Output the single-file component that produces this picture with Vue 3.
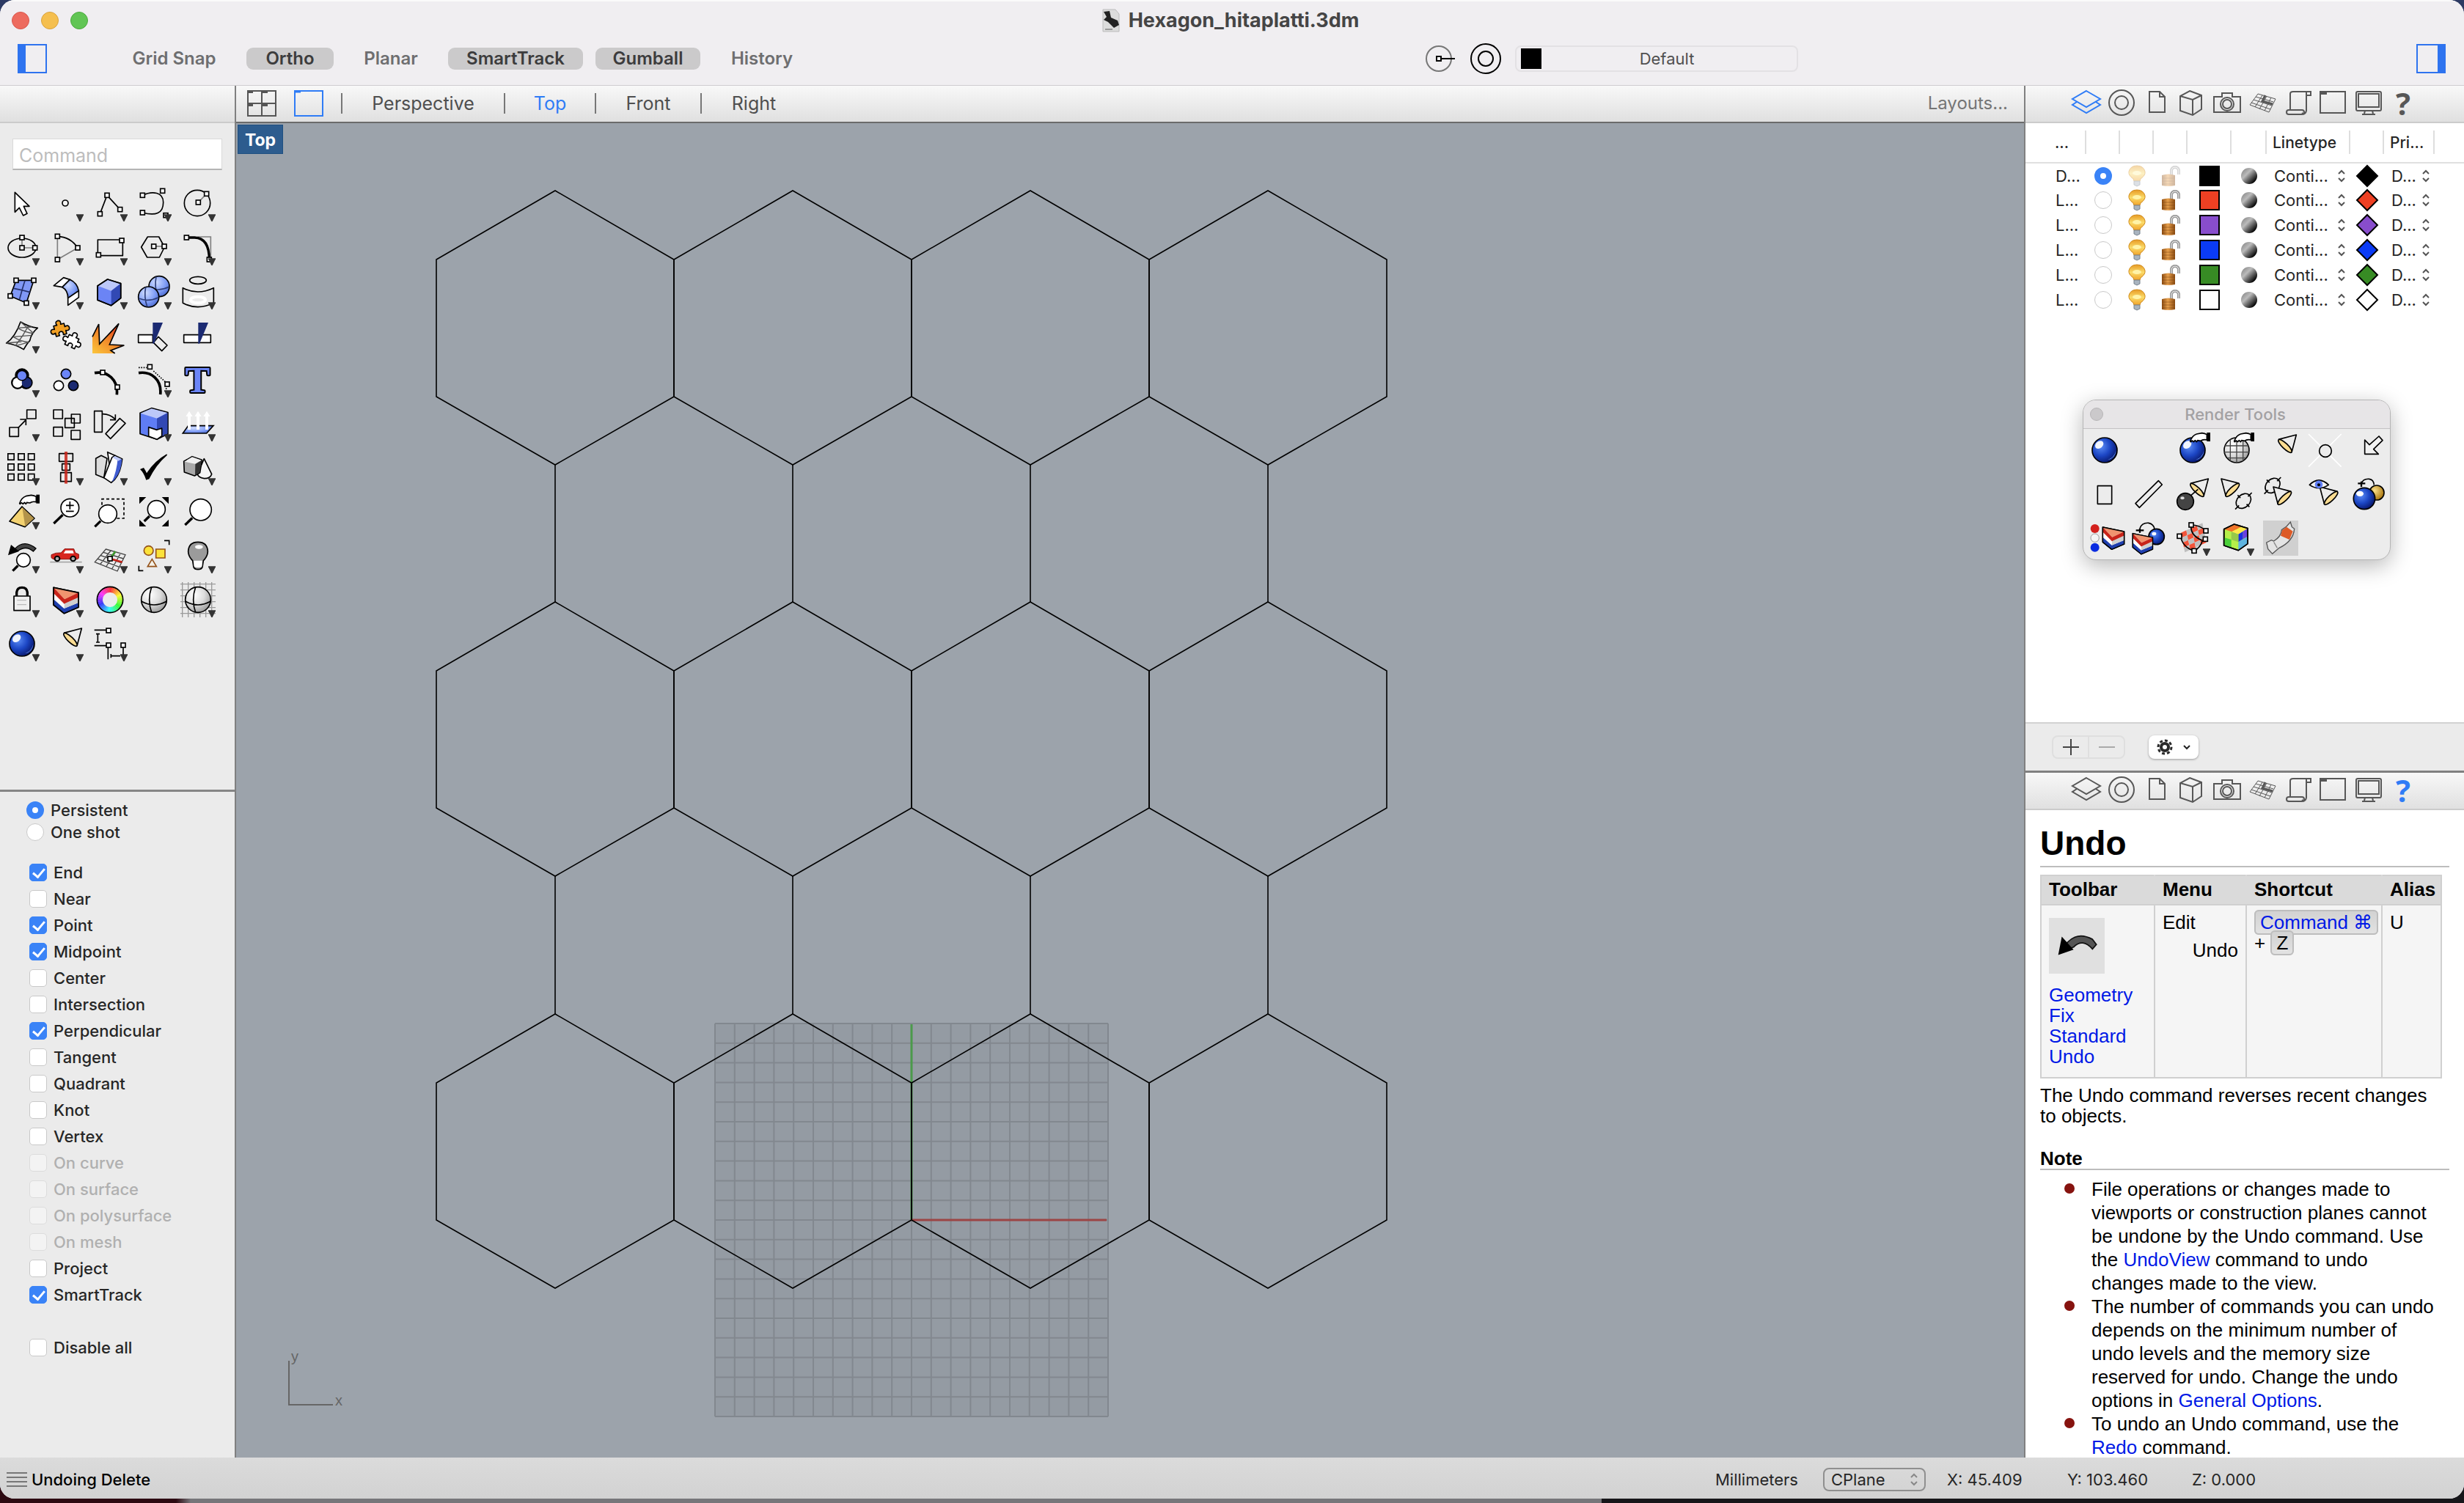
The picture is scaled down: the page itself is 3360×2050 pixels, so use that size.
<script setup>
import { ref } from 'vue'

const modes = ref([
  { label: 'Grid Snap', on: false, width: 163 },
  { label: 'Ortho', on: true, width: 119 },
  { label: 'Planar', on: false, width: 122 },
  { label: 'SmartTrack', on: true, width: 184 },
  { label: 'Gumball', on: true, width: 143 },
  { label: 'History', on: false, width: 134 },
])

const views = [
  { name: 'Perspective', width: 220 },
  { name: 'Top', width: 122 },
  { name: 'Front', width: 142 },
  { name: 'Right', width: 142 },
]
const activeView = ref('Top')

const snapMode = ref('Persistent')
const snaps = ref([
  { label: 'End', on: true },
  { label: 'Near' },
  { label: 'Point', on: true },
  { label: 'Midpoint', on: true },
  { label: 'Center' },
  { label: 'Intersection' },
  { label: 'Perpendicular', on: true },
  { label: 'Tangent' },
  { label: 'Quadrant' },
  { label: 'Knot' },
  { label: 'Vertex' },
  { label: 'On curve', off: true },
  { label: 'On surface', off: true },
  { label: 'On polysurface', off: true },
  { label: 'On mesh', off: true },
  { label: 'Project' },
  { label: 'SmartTrack', on: true },
])

const layers = [
  { name: 'D...', color: '#000000' },
  { name: 'L...', color: '#ee4023' },
  { name: 'L...', color: '#884dcc' },
  { name: 'L...', color: '#0b3bf5' },
  { name: 'L...', color: '#378b24' },
  { name: 'L...', color: '#ffffff' },
]
const currentLayer = ref(0)

// Icon drawing helpers; tool icons live in a 144-unit square.
const K = 'stroke="#000" stroke-width="5" stroke-linejoin="round"'
const p = (d, fill = 'none', extra = K) => `<path d="${d}" fill="${fill}" ${extra}/>`
const line = (d, w = 5, color = '#000') => `<path d="${d}" fill="none" stroke="${color}" stroke-width="${w}"/>`
const grey = (d) => line(d, 5, '#808080')
const c = (x, y, r, fill = '#fff', w = 5) => `<circle cx="${x}" cy="${y}" r="${r}" fill="${fill}" stroke="#000" stroke-width="${w}"/>`
const sq = (x, y, s = 18, fill = '#fff') => `<rect x="${x - s / 2}" y="${y - s / 2}" width="${s}" height="${s}" fill="${fill}" stroke="#000" stroke-width="5"/>`
const sqs = (...pts) => pts.map(([x, y]) => sq(x, y)).join('')
const menu = '<path d="M114 115H144V118L131 144H127L114 118Z" fill="#333"/>'

const hand = p('M62 36Q70 12 88 6L110 2Q122 3 130 8V30Q115 26 104 34L92 32 88 38 82 32 76 38 70 33 64 38Z', '#fff') +
  '<path d="M130 0H144V36H130Z"/>'
const ball = c(72, 72, 51, 'url(#blue-ball)') + '<ellipse cx="50" cy="50" rx="19" ry="14" transform="rotate(-40 50 50)" fill="#fff" opacity=".92"/><path d="M84 112Q112 102 118 74Q116 104 84 112" fill="#7fb4ff"/>'
const globe = c(72, 72, 52, 'url(#grey-ball)') + line('M62 20Q44 72 62 124M20 78Q72 108 124 78')
const spot = '<path d="M63 28L136 9L117 81" fill="#ececec" stroke="#000" stroke-width="5" stroke-linejoin="round"/><ellipse cx="90" cy="55" rx="11" ry="37" transform="rotate(-46 90 55)" fill="#fbdc91" stroke="#000" stroke-width="5"/>'
const lens = (x, y, r, hx, hy) => {
  const d = Math.hypot(hx - x, hy - y)
  const ex = x + ((hx - x) * (r + 4)) / d
  const ey = y + ((hy - y) * (r + 4)) / d
  return line(`M${hx} ${hy}L${ex} ${ey}`, 10) + c(x, y, r)
}
const wedge = p('M21 22L123 43V103L64 128L21 93Z', '#fff') +
  '<path d="M21 22L123 43L66 70Z" fill="#f0946f"/><path d="M21 22L66 70L123 43V64L66 90L21 45Z" fill="#c8241a"/><path d="M21 70L64 108L123 84V103L64 128L21 93Z" fill="#1f3fae"/><path d="M66 88L123 62V84L64 108Z" fill="#cfcfcf"/>' +
  p('M21 22L123 43V103L64 128L21 93Z')
const cube = p('M21 48L62 21L116 38V98L77 128L21 106Z', '#6b84f5') +
  '<path d="M23 48L62 23L114 39L77 68Z" fill="#bcc8f9"/><path d="M77 68L114 40V97L77 126Z" fill="#3249b4"/>' + p('M21 48L62 21L116 38V98L77 128L21 106Z')
const wheel = Array.from({ length: 36 }, (_, i) => {
  const a = ((i * 10 - 90) * Math.PI) / 180
  const b = ((i * 10 - 79) * Math.PI) / 180
  const at = (r, t) => `${(72 + r * Math.cos(t)).toFixed(1)} ${(72 + r * Math.sin(t)).toFixed(1)}`
  return `<path d="M${at(30, a)}L${at(53, a)}L${at(53, b)}L${at(30, b)}Z" fill="hsl(${i * 10} 95% 60%)"/>`
}).join('') + '<circle cx="72" cy="72" r="53" fill="none" stroke="#000" stroke-width="5"/>'
const ring = (x, y) => `<g transform="rotate(45 ${x} ${y})"><ellipse cx="${x}" cy="${y}" rx="26" ry="34" fill="none" stroke="#000" stroke-width="5"/><path d="M${x} ${y - 48}v22M${x} ${y + 48}v-22M${x - 34} ${y}h16M${x + 34} ${y}h-16" stroke="#000" stroke-width="5"/></g>`
const meshBall = (x, y) => c(x, y, 42, 'url(#soft-blue)') + line(`M${x - 12} ${y - 40}Q${x - 20} ${y} ${x - 6} ${y + 40}M${x - 40} ${y + 6}Q${x} ${y + 22} ${x + 40} ${y + 2}`, 5, '#2f3f7a')
const undoArrow = '<path d="M24 90Q60 20 120 52L132 68L120 82Q90 48 62 76Z" fill="#555" stroke="#111" stroke-width="4"/><path d="M15 100L26 44L62 84Z" fill="#000"/>'
// A jigsaw piece centred on the origin, one notch and three knobs.
const piece = (x, y, turn, fill) => `<g transform="translate(${x} ${y}) rotate(${turn})">` +
  p('M-22 -22H-8Q-14 -38 0 -39Q14 -38 8 -22H22V-8Q38 -14 39 0Q38 14 22 8V22H8Q12 8 0 7Q-12 8 -8 22H-22V8Q-38 14 -39 0Q-38 -14 -22 -8Z', fill) + '</g>'

const tools = [
  ['Select', p('M43 25V106L61 88L77 120L93 112L79 82H102Z', '#fff')],
  ['Point', c(69, 69, 12, '#f4f4f4'), 1],
  ['Polyline', line('M31 113L60 37L113 95') + sqs([60, 37], [31, 113], [113, 95]), 1],
  ['Curve', line('M25 37C66 18 110 24 110 66C110 112 78 122 25 108') + sqs([25, 37], [107, 19], [25, 108], [120, 119]), 1],
  ['Circle', c(69, 69, 53, 'none') + grey('M73 66L107 31') + sqs([107, 31], [73, 66]), 1],
  ['Ellipse', `<ellipse cx="72" cy="72" rx="57" ry="39" fill="none" ${K}/>` + grey('M72 30V72H125') + sqs([72, 30], [72, 72], [125, 72]), 1],
  ['Arc', grey('M37 25V120L120 72') + line('M37 25Q90 27 120 72') + sqs([37, 25], [37, 120], [120, 72]), 1],
  ['Rectangle', p('M22 39H124V104H22Z') + sqs([120, 42], [25, 101]), 1],
  ['Polygon', p('M20 69L46 27H92L115 69L94 111H44Z') + grey('M71 66H114') + sqs([71, 66], [114, 66]), 1],
  ['Fillet', grey('M70 27H124V110') + line('M25 30H58Q118 32 118 120', 10) + sqs([25, 30], [118, 120]), 1],
  ['Surface', p('M48 25H120L90 118L24 89Z', '#8098f6') + line('M84 26Q76 50 62 102M38 58Q70 64 106 74', 5, '#26336e') + sqs([48, 25], [120, 25], [90, 118], [24, 89]), 1],
  ['Bend surface', p('M22 47L62 14L88 22L57 53Z', '#fff') + p('M57 53L88 22Q118 36 124 68L80 98Q80 66 57 53Z', 'url(#soft-blue)') + p('M80 98L124 68V95L80 127Z', '#fff'), 1],
  ['Box', cube, 1],
  ['Sphere', meshBall(93, 50) + meshBall(50, 93), 1],
  ['Project', `<ellipse cx="72" cy="25" rx="34" ry="15" fill="none" ${K}/>` + '<ellipse cx="72" cy="105" rx="30" ry="13" fill="none" stroke="#fff" stroke-width="12"/>' + p('M10 56Q70 88 136 56V118Q70 150 10 118Z'), 1],
  ['Mesh', p('M66 15Q100 36 136 40Q110 60 104 92Q92 104 79 128Q48 108 8 102Q44 78 66 15Z') + line('M54 40Q88 60 120 62M36 76Q68 96 100 98M98 32Q76 74 44 114M66 15L120 62M54 40L112 36M36 76L112 70M8 102L70 96M50 112L100 98', 4, '#555'), 1],
  ['Join', piece(96, 96, 25, '#fff') + piece(48, 48, -15, '#f2a024')],
  ['Explode', '<path d="M0 76L26 24L29 106L108 22L70 108L130 111L75 132L92 144H0Z" fill="url(#fire)"/>' + line('M0 76L26 24L29 106L108 22L70 108L130 111L75 132L92 144')],
  ['Trim', p('M8 68H67V100H8Z', '#fff') + p('M90 76L126 111L104 134L70 100Z', '#ececec') + '<path d="M67 18H108L72 104H67Z" fill="#1b2a72"/>'],
  ['Split', p('M14 68H124V100H14Z', '#fff') + '<path d="M73 18H114L78 104H73Z" fill="#1b2a72"/>'],
  ['Group', c(72, 54, 22, '#000', 14) + c(54, 84, 22, '#000', 10) + c(89, 84, 22, '#000', 10) + '<circle cx="54" cy="84" r="20" fill="#fff"/><circle cx="91" cy="84" r="20" fill="#1b2a72"/>' + c(72, 55, 20, '#6b85f7', 4), 1],
  ['Ungroup', c(72, 48, 20, '#6b85f7') + c(42, 96, 20) + c(102, 96, 20, '#1b2a72')],
  ['Edit points', line('M9 44C62 34 106 72 100 133', 11) + sqs([42, 42], [102, 102])],
  ['Control points', line('M9 44C62 36 104 72 98 132', 11) + '<path d="M9 22H42M70 36L120 82M122 106V136" stroke="#000" stroke-width="5" stroke-dasharray="5 5"/>' + sqs([55, 19], [126, 90]), 1],
  ['Text', '<text x="70" y="122" text-anchor="middle" font-family="Liberation Serif, serif" font-weight="700" font-size="152" fill="#6b85f7" stroke="#000" stroke-width="12" stroke-linejoin="round" paint-order="stroke">T</text>'],
  ['Move', p('M92 15H129V51H92Z') + p('M21 87H58V124H21Z') + line('M56 89L86 58M64 54H88V78'), 1],
  ['Copy', p('M21 15H58V51H21ZM94 33H130V69H94ZM68 50H106V88H68ZM21 86H58V123H21ZM93 99H130V136H93Z')],
  ['Rotate', p('M8 20H40V106H8Z') + p('M112 50L135 70L74 133L54 113Z') + line('M42 32Q72 32 94 54M94 34V56H72')],
  ['Cap', p('M15 28L62 8L129 26V113L84 136L15 113Z', '#5f7df4') + '<path d="M17 29L62 10L127 27L84 50Z" fill="#bcc8f9"/><path d="M84 50L127 28V112L84 134Z" fill="#3249b4"/>' + p('M50 86L84 97L104 90V122L84 136L50 123Z', '#fff'), 1],
  ['Extrude', '<path d="M32 80H135L107 111H10Z" fill="url(#soft-blue)" stroke="#000" stroke-width="5"/><path d="M36 96V36M72 96V36M108 96V36" stroke="#fff" stroke-width="12"/><path d="M22 42L36 20L50 42ZM58 42L72 20L86 42ZM94 42L108 20L122 42Z" fill="#fff"/>', 1],
  ['Array', [27, 69, 110].map((y) => [27, 69, 110].map((x) => sq(x, y, 25, 'none')).join('')).join(''), 1],
  ['Align', p('M44 14H100V46H44ZM56 56H88V82H56ZM50 92H94V128H50Z') + '<path d="M66 6H78V137H66Z" fill="#c8241a" opacity=".85"/>', 1],
  ['Fold', p('M62 8L92 22L70 60Z', '#fff') + p('M14 34L36 22L60 34L47 113L14 100Z', '#dcdcdc') + p('M47 113L80 30L92 22L122 36L118 60Q108 110 77 133Z', '#fff') + '<path d="M104 32L121 38Q116 100 80 130Q100 84 104 32Z" fill="#3f5bd0"/><path d="M82 30L92 24L119 36L106 44Z" fill="#bcc8f9"/>', 1],
  ['Check', '<path d="M15 78L30 72Q38 84 42 94Q74 44 124 16L126 20Q80 60 52 118L40 122Q30 92 15 78Z"/>', 1],
  ['Solids', p('M97 35L128 98Q122 116 98 116Q72 112 70 98Z', '#f6f6f6') + p('M14 46L48 26L88 40L80 92L58 105L16 90Z', '#a9a9a9') + '<path d="M16 47L48 28L86 41L60 56Z" fill="#f0f0f0"/><path d="M61 57L86 42L79 91L60 103Z" fill="#333"/>', 1],
  ['Set surface', p('M72 51L123 99L84 134L21 111Z', '#f3d271') + '<path d="M73 54L121 99L85 132Z" fill="#b3934a"/>' + `<g transform="translate(0 2)">${hand}</g>`, 1],
  ['Zoom in or out', lens(88, 56, 37, 22, 120) + line('M88 30V62M72 46H104M72 70H104')],
  ['Zoom window', '<path d="M39 44V20H129V99H98" fill="none" stroke="#000" stroke-width="5" stroke-dasharray="12 9"/>' + lens(63, 81, 37, 10, 133)],
  ['Zoom extents', '<path d="M12 12H40L12 40ZM132 12H104L132 40ZM12 132V104L40 132ZM132 132V104L104 132Z"/>' + lens(82, 62, 36, 32, 111)],
  ['Zoom selected', lens(83, 64, 44, 19, 126)],
  ['Undo view', '<path d="M40 46Q80 2 129 42L118 54Q88 28 56 52Z" fill="#444" stroke="#000" stroke-width="4"/><path d="M15 70L27 27L60 54Z"/>' + lens(78, 90, 28, 34, 134), 1],
  ['Right view', '<path d="M7 98H137" stroke="#a9a9a9" stroke-width="5"/><path d="M12 68Q30 58 52 60L66 44H104L110 60L124 66V82L118 86H20L12 80Z" fill="#d8261f" stroke="#8c1410" stroke-width="3"/><path d="M70 50L62 62H104L100 50Z" fill="#fff"/>' + c(36, 84, 10, '#aaa', 6) + c(101, 84, 10, '#aaa', 6), 1],
  ['Set CPlane', line('M55 45L135 68L102 135L10 98ZM75 51L32 107M95 56L56 117M115 62L80 126M45 58L127 84M34 71L118 101M22 85L110 118', 4, '#444') + line('M72 84L94 54', 8, '#3f9a2e') + line('M72 84L122 98', 8, '#c8241a') + sqs([72, 84]), 1],
  ['Select objects', '<g fill="#fbe23a" stroke="#94521a" stroke-width="5"><circle cx="50" cy="51" r="19"/><path d="M80 45H117V81H80Z"/><path d="M64 86L46 116H82Z" fill="#f4f1e8"/></g>' + line('M114 10H134V28M10 113V133H28'), 1],
  ['Hide', p('M54 118L50 92Q32 74 32 54Q34 16 72 16Q110 16 112 54Q112 74 94 92L90 118Q86 128 72 128Q58 128 54 118Z', '#9b9b9b') + '<path d="M56 116L54 92H90L88 116Q72 124 56 116Z" fill="#fff"/><ellipse cx="76" cy="36" rx="16" ry="8" fill="#fff"/>', 1],
  ['Lock', line('M50 56V42Q52 22 72 22Q92 22 94 42V56', 10) + p('M39 57H105V116H39Z', '#efefef') + line('M52 74H90M52 92H90', 4, '#bbb'), 1],
  ['Edit layers', wedge, 1],
  ['Color', wheel, 1],
  ['Shade', globe],
  ['Ghosted', line('M0 8H144M0 32H144M0 56H144M0 80H144M0 104H144M0 128H144M8 0V144M32 0V144M56 0V144M80 0V144M104 0V144M128 0V144', 4, '#9a9a9a') + globe, 1],
  ['Render', ball, 1],
  ['Spotlight', spot, 1],
  ['Dimension', line('M8 16H60M8 80H60M22 30V68M15 32H30M15 66H30M64 88V136M126 88V134M74 122H114M76 114V130') + sqs([66, 18], [66, 78], [126, 78]), 1],
].map(([name, art, more]) => ({ name, art: art + (more ? menu : '') }))

const checker = ['#f2543a', '#bfbfbf']
const renderTools = [
  ['Render', ball],
  null,
  ['Render preview', ball + hand],
  ['Render mesh', c(72, 72, 51, 'url(#grey-ball)') + line('M24 54H120M21 80H123M34 104H110M46 28V116M72 21V123M98 28V116', 4, '#444') + hand],
  ['Spotlight', spot],
  ['Point light', line('M6 6L140 140M140 6L6 140', 5, '#fff') + c(75, 75, 25, '#ececec')],
  ['Directional light', p('M114 15L129 32L92 68L112 88H56V30L75 50Z', '#f2f2f2')],
  ['Rectangular light', p('M43 38H101V112H43Z')],
  ['Linear light', p('M112 17L127 33L34 127L18 110Z')],
  ['Light target', spot + line('M94 52L52 88') + c(42, 102, 34, '#444') + '<ellipse cx="30" cy="88" rx="8" ry="6" fill="#ddd"/>'],
  ['Edit light', `<g transform="matrix(-1 0 0 1 145 0)">${spot}</g>` + ring(100, 100)],
  ['Aim light', ring(39, 37) + `<g transform="translate(178 33) scale(-1 1)">${spot}</g>`],
  ['Light view', `<g transform="translate(188 33) scale(-1 1)">${spot}</g>` + p('M10 34Q48 -4 88 34Q48 60 10 34Z', '#f4f4f4') + '<circle cx="48" cy="32" r="16" fill="#5f7df4"/><circle cx="48" cy="34" r="6"/>'],
  ['Match properties', c(105, 66, 30, 'url(#gold)') + c(54, 90, 44, 'url(#blue-ball)') + '<ellipse cx="36" cy="70" rx="15" ry="11" fill="#fff"/>' + line('M42 30Q48 8 74 10Q92 12 94 34') + line('M28 28H58M42 20V42', 7)],
  ['Layer materials', '<circle cx="32" cy="33" r="18" fill="#d3201c"/><circle cx="32" cy="71" r="17" fill="#f4f4f4" stroke="#999" stroke-width="3"/><circle cx="32" cy="110" r="18" fill="#0a2be0"/>' + `<g transform="translate(46 8) scale(.86)">${wedge}</g>`],
  ['Material from layer', c(104, 66, 32, 'url(#blue-ball)') + '<ellipse cx="94" cy="54" rx="9" ry="7" fill="#fff"/>' + `<g transform="translate(-10 35) scale(.8)">${wedge}</g>` + line('M36 32Q44 8 72 10Q92 14 96 34') + line('M20 40H52M36 32V50', 7)],
  ['Mapping', [0, 1, 2, 3].map((r) => [0, 1, 2, 3].map((k) => `<path d="M${24 + k * 22 + r * 4} ${50 + r * 20 - k * 10}l22 -10l4 20l-22 10z" fill="${checker[(r + k) % 2]}"/>`).join('')).join('') + line('M22 62Q30 110 78 124M66 18Q60 60 112 82M66 18Q100 18 124 40M112 82Q104 112 78 124') + sqs([18, 64], [66, 18], [126, 42], [124, 76], [78, 124]) + menu],
  ['Texture', p('M20 35L62 15L117 32V95L79 122L20 102Z', '#b6f04a') + '<path d="M22 36L62 17L90 26L52 46Z" fill="#f0742a"/><path d="M90 26L115 33L79 56L52 46Z" fill="#ffe84a"/><path d="M79 56L98 44V76L79 88Z" fill="#1a2fe0"/><path d="M98 44L116 33V66L98 76Z" fill="#6a3fe0"/><path d="M79 88L116 66V95L79 121Z" fill="#5fb4e0"/><path d="M50 46L79 56V88L50 78Z" fill="#97c94a"/><path d="M22 70L50 78V110L22 101Z" fill="#4bd03a"/>' + p('M20 35L62 15L117 32V95L79 122L20 102Z') + menu],
  ['Decal', '<path d="M0 0H144V144H0Z" fill="#d0d0d0"/>' + p('M14 90L34 80L44 84Q74 66 76 38L96 24L112 6L118 26L128 34Q124 84 66 112L38 136L20 116Z', '#e4e4e4', 'stroke="#555" stroke-width="4"') + '<path d="M78 40L96 26L122 44L108 78L72 62Z" fill="#dd5a26"/><path d="M44 88L58 112" stroke="#888" stroke-width="4"/>'],
].map((t) => t && { name: t[0], art: t[1] })

const panelTabs = [
  ['Layers', '<path d="M24 8L43 19L24 30L5 19ZM11 23L5 27L24 38L43 27L37 23"/>'],
  ['Properties', '<circle cx="24" cy="24" r="17"/><circle cx="24" cy="24" r="9"/>'],
  ['Notes', '<path d="M14 9H28L35 16V37H14ZM28 9V16H35"/>'],
  ['Display objects', '<path d="M21 8L37 14V33L25 41L8 35V15ZM8 15L25 20L37 14M25 20V41"/>'],
  ['Named views', '<path d="M6 16H17V11H31V16H42V37H6Z"/><circle cx="24" cy="26" r="9"/><circle cx="24" cy="26" r="6"/>'],
  ['Named CPlanes', '<path d="M18 12L42 19L33 37L7 27ZM24 14L14 30M30 15L20 33M36 17L27 35M15 16L39 23M12 20L37 28M9 24L35 33" stroke-width="1"/><path d="M28 14L24 22L38 26" stroke-width="3"/>'],
  ['Script', '<path d="M14 34V12Q14 9 18 9H42V14H36V9M36 14V35Q35 40 30 40H12Q9 40 9 37T12 34H30Q33 34 33 37T30 38"/>'],
  ['Layouts', '<path d="M7 9H41V38H7Z"/><path d="M8 10H15V12H8Z" fill="currentColor"/>'],
  ['Display', '<rect x="8" y="9" width="34" height="26" rx="2"/><path d="M11 12H39V30H11ZM20 35L19 39M30 35L31 39M16 40H34"/>'],
]

// Honeycomb: pointy-top cells, corners in viewport coordinates.
const xs = [435, 759, 1083, 1407]
const cells = [92, 653, 1215].flatMap((y) =>
  xs.map((x) => `M${x} ${y}L${x + 162} ${y + 94}V${y + 281}L${x} ${y + 374}L${x - 162} ${y + 281}V${y + 94}Z`)
)
const links = [466, 1027].flatMap((y) => xs.map((x) => `M${x} ${y}v188`))
const gridSteps = Array.from({ length: 21 }, (_, i) => i * 26.8)
</script>

<template>
  <div class="desktop">
    <svg class="defs" aria-hidden="true">
      <defs>
        <radialGradient id="blue-ball" cx=".35" cy=".35" r=".75"><stop offset="0" stop-color="#5b8cf5" /><stop offset=".5" stop-color="#1c46c4" /><stop offset="1" stop-color="#050f5c" /></radialGradient>
        <radialGradient id="soft-blue" cx=".35" cy=".3" r=".8"><stop offset="0" stop-color="#cfdcff" /><stop offset=".6" stop-color="#7d9bf5" /><stop offset="1" stop-color="#4462c8" /></radialGradient>
        <radialGradient id="grey-ball" cx=".35" cy=".3" r=".8"><stop offset="0" stop-color="#fff" /><stop offset=".5" stop-color="#ddd" /><stop offset="1" stop-color="#8f8f8f" /></radialGradient>
        <radialGradient id="gold" cx=".35" cy=".35" r=".7"><stop offset="0" stop-color="#fbe08a" /><stop offset="1" stop-color="#a8740c" /></radialGradient>
        <linearGradient id="fire" x1="0" y1="1" x2=".8" y2="0"><stop offset="0" stop-color="#fbc63c" /><stop offset=".5" stop-color="#f28a2a" /><stop offset="1" stop-color="#e0301e" /></linearGradient>
        <linearGradient id="mat" x1=".1" y1="0" x2=".9" y2=".8"><stop offset="0" stop-color="#333" /><stop offset=".15" stop-color="#999" /><stop offset=".4" stop-color="#bbb" /><stop offset="1" stop-color="#000" /></linearGradient>
        <linearGradient id="bulb" x1="0" y1="0" x2="0" y2="1"><stop offset="0" stop-color="#e79a24" /><stop offset=".5" stop-color="#fbdc6a" /><stop offset="1" stop-color="#f0a32a" /></linearGradient>
        <linearGradient id="brass" x1="0" y1="0" x2="1" y2="0"><stop offset="0" stop-color="#8a4a10" /><stop offset=".45" stop-color="#e8a04c" /><stop offset="1" stop-color="#8a4a10" /></linearGradient>
      </defs>
    </svg>

    <div class="window">
      <header class="titlebar">
        <div class="title-row">
          <div class="lights">
            <button class="light red" aria-label="Close"></button>
            <button class="light yellow" aria-label="Minimize"></button>
            <button class="light green" aria-label="Zoom"></button>
          </div>
          <svg class="doc-icon" viewBox="0 0 24 32"><path d="M1 1H18L23 7V31H1Z" fill="#dcdcdc" stroke="#bbb" /><path d="M2 4L10 3 12 12 21 16 23 22 16 26 8 18 2 15 6 11Z" fill="#222" /><path d="M4 28H14" stroke="#999" stroke-width="2" /></svg>
          <h1 class="doc-title">Hexagon_hitaplatti.3dm</h1>
        </div>
        <div class="tool-row">
          <button class="panel-toggle toggle-start" aria-label="Toggle left sidebar"></button>
          <div class="modes">
            <button v-for="m in modes" :key="m.label" class="mode" :class="{ on: m.on }" :style="{ width: m.width + 'px' }" @click="m.on = !m.on">{{ m.label }}</button>
          </div>
          <div class="layer-picker">
            <svg width="40" height="42" viewBox="0 0 40 42"><circle cx="18" cy="21" r="17" fill="none" stroke="#777" stroke-width="2" /><path d="M18 21H40" stroke="#000" stroke-width="2" /><path d="M15 18H21V24H15Z" fill="#fff" stroke="#000" stroke-width="2" /></svg>
            <svg width="42" height="42" viewBox="0 0 42 42" fill="none" stroke="#000" stroke-width="2"><circle cx="21" cy="21" r="20" /><circle cx="21" cy="21" r="10" /></svg>
            <button class="current-layer"><span class="swatch"></span><span class="layer-name">Default</span></button>
          </div>
          <button class="panel-toggle toggle-end" aria-label="Toggle right sidebar"></button>
        </div>
      </header>

      <main class="body">
        <aside class="left">
          <div class="strip"></div>
          <section class="tools-pane">
            <input class="command" type="text" placeholder="Command" aria-label="Command" />
            <div class="tools">
              <button v-for="t in tools" :key="t.name" class="tool" :aria-label="t.name">
                <svg viewBox="0 0 144 144"><g v-html="t.art"></g></svg>
              </button>
            </div>
          </section>
          <section class="snaps">
            <div class="snap-modes">
              <label v-for="m in ['Persistent', 'One shot']" :key="m" class="option"><input v-model="snapMode" type="radio" name="snap-mode" :value="m" />{{ m }}</label>
            </div>
            <label v-for="s in snaps" :key="s.label" class="option check" :class="{ off: s.off }"><input v-model="s.on" type="checkbox" :disabled="s.off" />{{ s.label }}</label>
            <label class="option check all"><input type="checkbox" />Disable all</label>
          </section>
        </aside>

        <section class="center">
          <nav class="strip views">
            <button class="view-icon" aria-label="Four viewports"><svg width="40" height="36" viewBox="0 0 40 36"><path d="M1 1H39V35H1ZM20 1V35M1 18H39" fill="none" stroke="#555" stroke-width="2" /><path d="M1 2H8M20 2H28M1 20H8M20 20H28" stroke="#555" stroke-width="4" /></svg></button>
            <button class="view-icon" aria-label="Single viewport"><svg width="40" height="36" viewBox="0 0 40 36"><path d="M1 1H39V35H1Z" fill="none" stroke="#2f7cf6" stroke-width="2" /><path d="M1 2H9" stroke="#2f7cf6" stroke-width="3" /></svg></button>
            <template v-for="v in views" :key="v.name">
              <span class="sep"></span>
              <button class="view" :class="{ active: v.name === activeView }" :style="{ width: v.width + 'px' }" @click="activeView = v.name">{{ v.name }}</button>
            </template>
            <button class="layouts">Layouts...</button>
          </nav>
          <div class="viewport">
            <svg class="scene">
              <rect x="653" y="1228" width="536" height="536" fill="#949ba3" />
              <g stroke="#82888f" stroke-width="2">
                <path v-for="s in gridSteps" :key="s" :d="`M${653 + s} 1228v536M653 ${1228 + s}h536`" />
              </g>
              <path d="M921 1229V1496" stroke="#4b9a4b" stroke-width="3" />
              <path d="M921 1496H1187" stroke="#9c4545" stroke-width="3" />
              <g fill="none" stroke="#000" stroke-width="1.6">
                <path v-for="d in cells" :key="d" :d="d" />
                <path v-for="d in links" :key="d" :d="d" />
              </g>
              <path d="M72 1688V1748H132" fill="none" stroke="#666" stroke-width="2" />
              <text x="75" y="1689" class="axis">y</text>
              <text x="135" y="1749" class="axis">x</text>
            </svg>
            <button class="view-title">Top</button>
          </div>
        </section>

        <aside class="right">
          <section class="layers-pane">
            <nav class="strip tabs">
              <button v-for="(t, i) in panelTabs" :key="t[0]" class="tab" :class="{ active: i === 0 }" :aria-label="t[0]"><svg viewBox="0 0 48 48"><g v-html="t[1]"></g></svg></button>
              <button class="tab help-tab">?</button>
            </nav>
            <div class="layer-list">
              <table class="layers">
                <colgroup>
                  <col class="w-name" /><col class="w-icon" /><col class="w-icon" /><col class="w-icon" /><col class="w-color" /><col class="w-mat" /><col class="w-type" /><col class="w-icon" /><col class="w-print" /><col />
                </colgroup>
                <thead>
                  <tr><th class="first">...</th><th></th><th></th><th></th><th></th><th></th><th>Linetype</th><th></th><th>Pri...</th><th></th></tr>
                </thead>
                <tbody>
                  <tr v-for="(l, i) in layers" :key="i">
                    <td class="first">{{ l.name }}</td>
                    <td class="mid"><input v-model="currentLayer" type="radio" name="layer" :value="i" :aria-label="'Current layer ' + (i + 1)" /></td>
                    <td class="mid" :class="{ faded: i === 0 }">
                      <svg width="24" height="30" viewBox="0 0 24 30"><path d="M7 19Q0 14 1 9Q3 1 12 1T23 9Q24 14 17 19L16 22H8Z" fill="url(#bulb)" stroke="#d08a1c" /><ellipse cx="12" cy="11" rx="6" ry="3" fill="#fff3a8" /><path d="M8 22H16V27L12 29L8 27Z" fill="#a9b4bf" stroke="#77828d" /></svg>
                    </td>
                    <td class="mid" :class="{ faded: i === 0 }">
                      <svg width="28" height="30" viewBox="0 0 28 30"><path d="M15 14V7Q16 3 20 3T25 7V13" fill="none" stroke="#999" stroke-width="4" /><path d="M15 14V7Q16 3 20 3T25 7V13" fill="none" stroke="#eee" stroke-width="1" /><path d="M2 14Q11 11 20 14V28Q11 30 2 28Z" fill="url(#brass)" /><path d="M2 18H20M2 22H20M2 26H20" stroke="#7a4210" stroke-opacity=".5" /></svg>
                    </td>
                    <td class="mid"><span class="color" :style="{ background: l.color }"></span></td>
                    <td class="mid"><svg width="24" height="24" viewBox="0 0 24 24"><circle cx="12" cy="12" r="11" fill="url(#mat)" /></svg></td>
                    <td class="type"><span class="popup"><select aria-label="Linetype"><option>Conti...</option></select><svg class="arrows" viewBox="0 0 10 18"><path d="M1 6L5 2L9 6M1 12L5 16L9 12" /></svg></span></td>
                    <td class="mid"><svg width="32" height="32" viewBox="0 0 32 32"><path d="M16 2L30 16L16 30L2 16Z" :fill="l.color" stroke="#000" stroke-width="2" /></svg></td>
                    <td class="type"><span class="popup"><select aria-label="Print width"><option>D...</option></select><svg class="arrows" viewBox="0 0 10 18"><path d="M1 6L5 2L9 6M1 12L5 16L9 12" /></svg></span></td>
                    <td></td>
                  </tr>
                </tbody>
              </table>

              <div class="palette">
                <div class="palette-title"><button class="palette-close" aria-label="Close palette"></button>Render Tools</div>
                <div class="palette-tools">
                  <template v-for="(t, i) in renderTools" :key="i">
                    <button v-if="t" class="tool" :aria-label="t.name"><svg viewBox="0 0 144 144"><g v-html="t.art"></g></svg></button>
                    <span v-else></span>
                  </template>
                </div>
              </div>
            </div>
            <div class="actions">
              <div class="add-remove">
                <button aria-label="Add layer"><svg width="24" height="24" viewBox="0 0 24 24"><path d="M12 1V23M1 12H23" stroke="#444" stroke-width="2" /></svg></button>
                <button aria-label="Remove layer"><svg width="24" height="24" viewBox="0 0 24 24"><path d="M1 12H23" stroke="#aaa" stroke-width="2" /></svg></button>
              </div>
              <button class="gear" aria-label="Layer options">
                <svg width="22" height="22" viewBox="0 0 22 22" fill="none" stroke="#2a2a2a"><circle cx="11" cy="11" r="5" stroke-width="4" /><circle cx="11" cy="11" r="9" stroke-width="3" stroke-dasharray="4 3" /></svg>
                <svg width="10" height="8" viewBox="0 0 10 8"><path d="M1 2L5 6L9 2" fill="none" stroke="#222" stroke-width="2" /></svg>
              </button>
            </div>
          </section>

          <section class="help-pane">
            <nav class="strip tabs">
              <button v-for="t in panelTabs" :key="t[0]" class="tab" :aria-label="t[0]"><svg viewBox="0 0 48 48"><g v-html="t[1]"></g></svg></button>
              <button class="tab help-tab active">?</button>
            </nav>
            <article class="help">
              <h2>Undo</h2>
              <table class="info">
                <thead><tr><th class="i-tool">Toolbar</th><th class="i-menu">Menu</th><th class="i-key">Shortcut</th><th>Alias</th></tr></thead>
                <tbody>
                  <tr>
                    <td>
                      <div class="thumb"><svg viewBox="0 0 144 144"><g v-html="undoArrow"></g></svg></div>
                      <a href="#">Geometry Fix</a><br /><a href="#">Standard</a><br /><a href="#">Undo</a>
                    </td>
                    <td>Edit<div class="sub">Undo</div></td>
                    <td class="keys"><kbd><a href="#">Command ⌘</a></kbd><br />+ <kbd>Z</kbd></td>
                    <td>U</td>
                  </tr>
                </tbody>
              </table>
              <p>The Undo command reverses recent changes to objects.</p>
              <h3>Note</h3>
              <ul>
                <li>File operations or changes made to viewports or construction planes cannot be undone by the Undo command. Use the <a href="#">UndoView</a> command to undo changes made to the view.</li>
                <li>The number of commands you can undo depends on the minimum number of undo levels and the memory size reserved for undo. Change the undo options in <a href="#">General Options</a>.</li>
                <li>To undo an Undo command, use the <a href="#">Redo</a> command.</li>
              </ul>
            </article>
          </section>
        </aside>
      </main>

      <footer class="status">
        <svg class="grip" viewBox="0 0 28 22"><path d="M0 2H28M0 8H28M0 14H28M0 20H28" stroke="#777" stroke-width="2" /></svg>
        <span class="message">Undoing Delete</span>
        <span class="units">Millimeters</span>
        <span class="plane"><select aria-label="Coordinate system"><option>CPlane</option></select><svg class="arrows" viewBox="0 0 10 18"><path d="M1 6L5 2L9 6M1 12L5 16L9 12" /></svg></span>
        <span class="coord x">X: 45.409</span>
        <span class="coord y">Y: 103.460</span>
        <span class="coord z">Z: 0.000</span>
      </footer>
    </div>
  </div>
</template>

<style>
body { margin: 0; background: #17161a; }
</style>

<style scoped>
* { box-sizing: border-box; }
button, input, select { font: inherit; color: inherit; margin: 0; padding: 0; border: 0; background: none; border-radius: 0; }
.desktop {
  height: 100vh;
  padding-bottom: 6px;
  overflow: hidden;
  background: linear-gradient(to right, #2d0a12 0, #2d0a12 240px, #77767a 260px, #77767a 65%, #17161a 65%);
  font: 22px/28px Inter, sans-serif;
  color: #262626;
}
.defs { position: absolute; width: 0; height: 0; }
.window { display: flex; flex-direction: column; height: 100%; overflow: hidden; border-radius: 20px; background: #ebebeb; box-shadow: 0 -30px 0 20px #2c3a63; clip-path: inset(-30px -20px 0 -20px); }

.titlebar { flex: none; height: 117px; background: #f0eef1; border-bottom: 1px solid #cfcdd0; border-top: 2px solid #fafafa; }
.title-row { display: flex; align-items: center; justify-content: center; gap: 12px; height: 52px; padding-right: 4px; position: relative; }
.lights { position: absolute; left: 16px; top: 14px; display: flex; gap: 16px; }
.light { width: 24px; height: 24px; border-radius: 50%; border: 1px solid #d9564c; background: #ed6b5f; }
.light.yellow { background: #f5bf4f; border-color: #d9a23c; }
.light.green { background: #61c554; border-color: #4ba93e; }
.doc-icon { width: 24px; height: 32px; }
.doc-title { margin: 0; font-size: 27px; font-weight: 700; color: #454545; }
.tool-row { display: flex; align-items: center; height: 52px; padding: 0 25px 0 24px; }
.panel-toggle { flex: none; width: 40px; height: 40px; border: 2px solid #2e73ef; }
.toggle-start { border-left-width: 11px; }
.toggle-end { border-right-width: 11px; margin-left: auto; }
.modes { display: flex; gap: 17px; margin-left: 92px; }
.mode { height: 30px; border-radius: 9px; font-size: 24px; line-height: 30px; font-weight: 600; color: #6e6e70; text-align: center; white-space: nowrap; }
.mode.on { background: #cbcacb; color: #3c3c3d; }
.layer-picker { display: flex; align-items: center; gap: 19px; margin-left: 838px; }
.current-layer { display: flex; align-items: center; width: 386px; height: 36px; border: 2px solid #e3e1e4; border-radius: 8px; padding: 0 6px; }
.layer-picker svg + svg { margin-left: 2px; }
.swatch { width: 28px; height: 28px; background: #000; }
.layer-name { flex: 1; text-align: center; font-size: 22px; color: #505050; }

.body { flex: 1; min-height: 0; display: flex; }
.strip { flex: none; height: 51px; background: linear-gradient(#f8f8f8, #e0e0e0); border-bottom: 2px solid #cbcbcb; }

.left { flex: none; width: 322px; border-right: 2px solid #808080; display: grid; grid-template-rows: 51px minmax(0, 912fr) minmax(0, 908fr); }
.tools-pane { border-bottom: 3px solid #868686; overflow: hidden; }
.command { display: block; width: 286px; height: 43px; margin: 21px 0 22px 17px; padding: 3px 8px 0; background: #fff; border: 1px solid #d9d9d9; border-bottom: 2px solid #b4b4b4; font-size: 25px; }
.command::placeholder { color: #bdbdbd; opacity: 1; }
.tools { display: grid; grid-template-columns: repeat(5, 48px); grid-auto-rows: 48px; gap: 12px; padding-left: 6px; }
.tool { display: block; width: 48px; height: 48px; }
.tool svg { display: block; width: 48px; height: 48px; overflow: visible; }

.snaps { padding: 10px 0 0 36px; overflow: hidden; }
.snap-modes { margin-bottom: 22px; }
.option { display: flex; align-items: center; gap: 9px; height: 30px; font-size: 22px; font-weight: 500; white-space: nowrap; }
.option.check { height: 36px; margin-left: 4px; }
.option.all { margin-top: 36px; }
.option.off { color: #b0b0b0; }
input[type='radio'], input[type='checkbox'] { appearance: none; flex: none; width: 24px; height: 24px; background: #fff; border: 1px solid #c9c9c9; display: block; }
input[type='radio'] { border-radius: 50%; }
input[type='checkbox'] { border-radius: 5px; }
.off input { background: #f3f3f3; border-color: #dcdcdc; }
input[type='radio']:checked { border: 8px solid #3a83f7; }
input[type='checkbox']:checked { background: #3a83f7; border-color: #3a83f7; }
input[type='checkbox']:checked::after { content: ''; display: block; width: 7px; height: 13px; margin: 2px 0 0 7px; border: solid #fff; border-width: 0 3px 3px 0; transform: rotate(40deg); }

.center { flex: 1; min-width: 0; display: flex; flex-direction: column; }
.views { display: flex; align-items: center; padding: 0 22px 2px 15px; border-bottom-color: #6b6b6b; font-size: 25px; color: #4f4f4f; }
.view-icon { width: 40px; height: 36px; margin-right: 24px; }
.view-icon svg { display: block; }
.sep { flex: none; width: 2px; height: 28px; background: #777; }
.view { text-align: center; }
.view.active { color: #2f7cf6; }
.layouts { margin-left: auto; font-size: 24px; color: #757575; }
.viewport { position: relative; flex: 1; min-height: 0; background: #9ca3ab; }
.scene { position: absolute; inset: 0; width: 100%; height: 100%; }
.axis { font: 20px 'Liberation Sans', sans-serif; fill: #666; }
.view-title { position: absolute; left: 2px; top: 2px; width: 62px; height: 40px; padding-top: 2px; background: #2d5c8e; border: 1px solid #1f4f80; color: #fff; font-size: 23px; font-weight: 700; }

.right { flex: none; width: 600px; border-left: 2px solid #808080; display: grid; grid-template-rows: minmax(0, 937fr) minmax(0, 934fr); background: #fff; }
.layers-pane { display: flex; flex-direction: column; border-bottom: 3px solid #808080; }
.tabs { display: flex; padding-left: 59px; }
.tab { flex: none; width: 48px; height: 48px; color: #575757; }
.tab svg { display: block; width: 48px; height: 48px; margin-top: -2px; fill: none; stroke: currentColor; stroke-width: 2px; }
.tab.active { color: #2f7cf6; }
.help-tab { font: 700 42px/44px 'Open Sans', sans-serif; }
.layer-list { position: relative; flex: 1; min-height: 0; background: #fff; }
.layers { width: 100%; border-collapse: collapse; table-layout: fixed; }
.w-name { width: 83px; } .w-icon { width: 46px; } .w-color { width: 60px; } .w-mat { width: 48px; } .w-type { width: 114px; } .w-print { width: 69px; }
.layers th { height: 54px; padding: 0 0 0 8px; font-weight: 500; font-size: 21px; text-align: left; white-space: nowrap; border-bottom: 2px solid #e0e0e0; background: linear-gradient(#dedede, #dedede) no-repeat right 10px / 2px 32px; }
.layers th.first { padding-left: 40px; }
.layers th:last-child { background: none; }
.layers td { height: 34px; padding: 0; font-size: 22px; white-space: nowrap; }
.layers td.first { padding-left: 41px; }
.mid svg, .mid input, .color { display: block; margin: 0 auto; }
.color { width: 28px; height: 28px; border: 2px solid #000; }
.faded { opacity: .4; }
.layers td.type { padding-left: 10px; }
.popup { display: flex; align-items: center; justify-content: space-between; padding-right: 7px; }
select { appearance: none; height: 28px; min-width: 0; }
.arrows { flex: none; width: 10px; height: 18px; fill: none; stroke: #555; stroke-width: 2px; }

.palette { position: absolute; right: 100px; top: 377px; width: 420px; border-radius: 18px; border: 1px solid #b5b5b5; background: #ececec; box-shadow: 0 8px 30px rgba(0, 0, 0, .28); overflow: hidden; }
.palette-title { position: relative; height: 39px; padding-right: 4px; border-bottom: 1px solid #c4c2c4; background: #e7e5e7; text-align: center; font-size: 22px; line-height: 38px; font-weight: 500; color: #a3a1a3; }
.palette-close { position: absolute; left: 9px; top: 10px; width: 18px; height: 18px; border-radius: 50%; background: #cbc9cb; border: 1px solid #b7b5b7; }
.palette-tools { display: grid; grid-template-columns: repeat(7, 48px); grid-auto-rows: 48px; gap: 12px; padding: 5px; }

.actions { flex: none; display: flex; align-items: center; gap: 32px; height: 66px; padding: 0 36px 0 36px; background: #ebebeb; border-top: 2px solid #d2d2d2; }
.add-remove { display: flex; width: 100px; height: 32px; border: 2px solid #dfdfdf; border-radius: 8px; }
.add-remove button { flex: 1; display: flex; align-items: center; justify-content: center; }
.add-remove button + button { border-left: 2px solid #dfdfdf; }
.gear { display: flex; align-items: center; justify-content: center; gap: 14px; width: 68px; height: 32px; border-radius: 8px; background: #fff; box-shadow: 0 1px 3px rgba(0, 0, 0, .35); }

.help-pane { overflow: hidden; }
.help { padding: 20px 20px 0; font: 26px/28px 'Liberation Sans', Arial, sans-serif; color: #000; }
.help a { color: #0019e6; text-decoration: none; }
h2 { margin: 0 0 10px; padding-bottom: 6px; font-size: 46px; line-height: 50px; border-bottom: 2px solid #bdbdbd; }
.info { width: 548px; border-collapse: collapse; table-layout: fixed; background: #f5f5f5; }
.info th, .info td { border: 2px solid #d0d0d0; padding: 4px 10px; text-align: left; vertical-align: top; }
.info th { height: 40px; background: #dadada; border-color: #d0d0d0 #dadada; }
.info th:first-child { border-left-color: #d0d0d0; }
.info th:last-child { border-right-color: #d0d0d0; }
.info td { height: 236px; padding-top: 9px; padding-bottom: 0; }
.i-tool { width: 155px; } .i-menu { width: 125px; } .i-key { width: 185px; }
.thumb { width: 76px; height: 76px; margin: 8px 0 15px; padding: 6px; background: #e0e0e0; }
.thumb svg { display: block; width: 64px; height: 64px; }
.sub { margin-top: 10px; text-align: right; }
kbd { font: inherit; padding: 0 6px; border: 2px solid #bdbdbd; border-radius: 6px; background: linear-gradient(#d2d2d2, #e2e2e2); }
.keys { white-space: nowrap; }
.help p { margin: 9px 0 30px; padding-right: 12px; }
h3 { margin: 0; font-size: 26px; line-height: 28px; border-bottom: 2px solid #bdbdbd; }
ul { margin: 10px 0 0; padding: 0 12px 0 70px; list-style: none; line-height: 32px; }
li { position: relative; }
li::before { content: ''; position: absolute; left: -37px; top: 8px; width: 14px; height: 14px; border-radius: 50%; background: #86130f; }

.status { flex: none; display: flex; align-items: center; height: 56px; padding-top: 3px; background: linear-gradient(#dbdbdb, #d2d2d2); font-size: 22px; }
.grip { width: 28px; height: 22px; margin-left: 9px; }
.message { margin-left: 6px; font-weight: 500; color: #000; }
.units { margin-left: auto; }
.plane { display: flex; align-items: center; justify-content: space-between; width: 140px; height: 32px; margin: 0 29px 0 34px; padding: 0 9px; border: 2px solid #8f8f8f; border-radius: 8px; font-size: 22px; }
.plane .arrows { stroke: #888; }
.coord { white-space: nowrap; }
.x { width: 164px; } .y { width: 170px; } .z { width: 371px; }
</style>
